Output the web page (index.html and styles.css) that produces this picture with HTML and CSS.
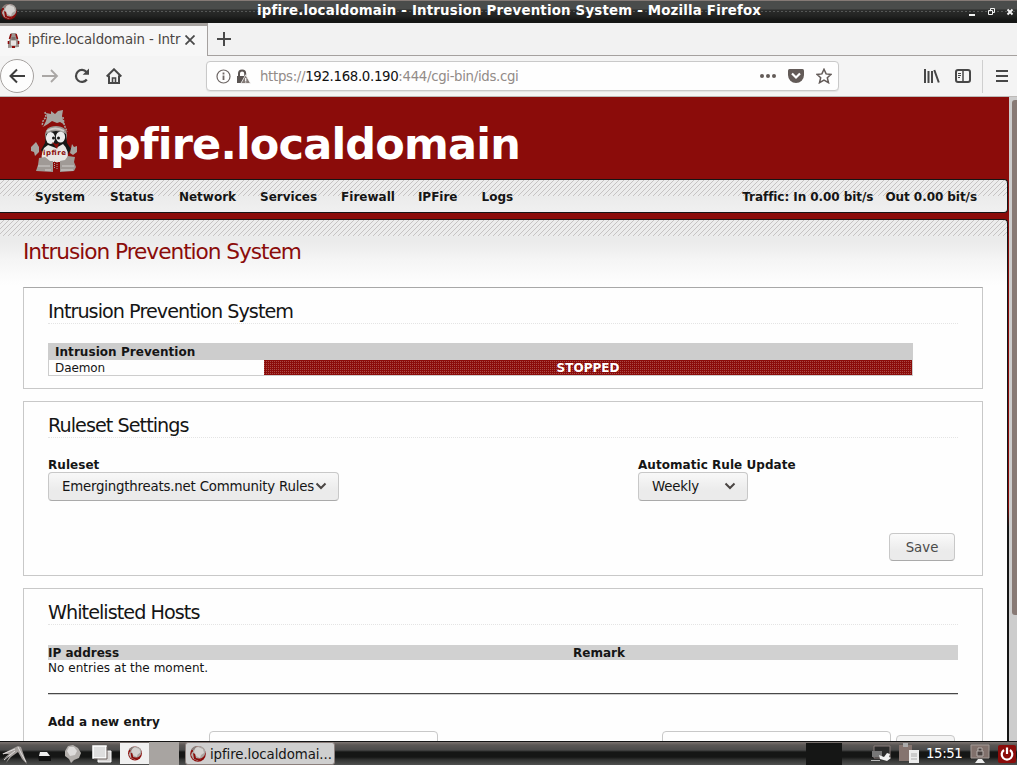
FILE: index.html
```html
<!DOCTYPE html>
<html lang="en">
<head>
<meta charset="utf-8">
<title>ipfire.localdomain - Intrusion Prevention System</title>
<link rel="stylesheet" href="styles.css">
</head>
<body>
<svg class="defs" width="0" height="0" aria-hidden="true">
  <symbol id="globe" viewBox="0 0 18 18">
    <circle cx="9" cy="9" r="7.8" fill="#8b0c0a"/>
    <circle cx="10" cy="7.3" r="6.3" fill="#a9a5a2"/>
    <path d="M6 3l3-1 5 2 1 4-3 2-1 3-4-2-2-4z" fill="#d5d2d0"/>
    <path d="M3 7l3 1 1 4 5 2-3 2-5-2-2-4z" fill="#b5aeab"/>
    <path d="M4 8l2 1 1 4 5 1-2 2-5-2z" fill="#8b0c0a"/>
    <path d="M2 5q2-4 6-4l-3 4z" fill="#8b7f7c"/>
  </symbol>
  <symbol id="chev" viewBox="0 0 12 8"><path d="M1.5 1.5L6 6l4.500-4.500" fill="none" stroke="#4a4543" stroke-width="2"/></symbol>
</svg>

<header class="titlebar">
  <svg class="win-icon" width="18" height="18"><use href="#globe"/></svg>
  <span class="win-title">ipfire.localdomain - Intrusion Prevention System - Mozilla Firefox</span>
  <svg class="win-btns" width="46" height="10" viewBox="0 0 46 10" fill="none" stroke="#f2f2f2">
    <path d="M0 8h6" stroke-width="2"/><path d="M21.500 3.500v-2h4v4h-2M19.500 3.500h4v4h-4z"/><path d="M38.500 2.500l5 5M43.500 2.500l-5 5" stroke-width="2"/>
  </svg>
</header>

<div class="tabs">
  <div class="tab">
    <svg width="13" height="17" viewBox="0 0 13 17"><path d="M4 1l5 0 1 4 2 5 0 5-11 1 0-5 2-4z" fill="#9c9490"/><path d="M4 2L2.500 7M9 2l1.500 5M1.500 9v3M11.500 9v3" stroke="#8b0c0a" stroke-width="1.600"/><path d="M4.500 5h4v3h-4z" fill="#7b7370"/><path d="M4 8.500h5v5H4z" fill="#e8e6e4"/><path d="M5 14h3v2H5z" fill="#8b0c0a"/></svg>
    <span class="tab-text">ipfire.localdomain - Intr</span>
    <svg class="tab-close" width="10" height="10" viewBox="0 0 10 10"><path d="M.5 .5l9 9M9.500 .5l-9 9" stroke="#4a4a4a" stroke-width="1.800"/></svg>
  </div>
  <div class="newtab"><svg width="14" height="14" viewBox="0 0 14 14"><path d="M7 0v14M0 7h14" stroke="#4a4a4a" stroke-width="2"/></svg></div>
</div>

<nav class="toolbar">
  <div class="back"><svg width="18" height="16" viewBox="0 0 18 16" fill="none" stroke="#3e3e3e" stroke-width="2"><path d="M17 8H3M9 1.500L2.500 8 9 14.500"/></svg></div>
  <svg class="fwd" width="17" height="14" viewBox="0 0 17 14" fill="none" stroke="#aaa7a5" stroke-width="1.800"><path d="M0 7h15M9 1l6 6-6 6"/></svg>
  <svg class="reload" width="16" height="16" viewBox="0 0 16 16"><path d="M12.800 11.500A6 6 0 1 1 12.500 4" fill="none" stroke="#474747" stroke-width="2.200"/><path d="M15 .5v6.300H8.700z" fill="#474747"/></svg>
  <svg class="home" width="16" height="16" viewBox="0 0 16 16" fill="none" stroke="#474747" stroke-width="2"><path d="M.7 8.500L8 1.300l7.300 7.200M3 7.500V15h10V7.500"/><path d="M6.500 15v-5h3v5" stroke-width="1.600"/></svg>
  <div class="urlbar">
    <svg width="15" height="15" viewBox="0 0 15 15" fill="none" stroke="#6e6765"><circle cx="7.500" cy="7.500" r="6.500" stroke-width="1.200"/><path d="M7.500 6.500V11M7.500 3.500v2" stroke-width="1.800"/></svg>
    <svg class="lock" width="15" height="15" viewBox="0 0 15 15"><path d="M3 7V4.500a3 3 0 0 1 6.200 0V7" fill="none" stroke="#5a5452" stroke-width="2"/><path d="M1 7h9l-4 7H1z" fill="#5a5452"/><path d="M9.700 5.800L14.600 14.500H4.800z" fill="#827a77" stroke="#fdfdfd" stroke-width=".8"/><path d="M9.700 9v3M9.700 12.600v1" stroke="#fff" stroke-width="1.200"/></svg>
    <span class="url">https://<b>192.168.0.190</b>:444/cgi-bin/ids.cgi</span>
    <svg class="dots" width="16" height="4" viewBox="0 0 16 4" fill="#635b58"><circle cx="2" cy="2" r="2"/><circle cx="8" cy="2" r="2"/><circle cx="14" cy="2" r="2"/></svg>
    <svg class="pocket" width="16" height="14" viewBox="0 0 16 14"><path d="M1.500 0h13Q16 0 16 1.500V6A8 8 0 0 1 0 6V1.500Q0 0 1.500 0z" fill="#635b58"/><path d="M4 4.500l4 4 4-4" fill="none" stroke="#fff" stroke-width="2.200"/></svg>
    <svg class="star" width="16" height="16" viewBox="0 0 16 16"><path d="M8 1.300l2.100 4.600 5 .5-3.800 3.300 1.200 5L8 12.100l-4.500 2.600 1.200-5L.9 6.400l5-.5z" fill="none" stroke="#635b58" stroke-width="1.500"/></svg>
  </div>
  <svg class="library" width="16" height="14" viewBox="0 0 16 14" stroke="#474747" stroke-width="2"><path d="M1 0v14M4.500 2v12M8 2v12M10.300 1l4.500 12.500"/></svg>
  <svg class="sidebar" width="16" height="14" viewBox="0 0 16 14" fill="none" stroke="#474747"><rect x="1" y="1" width="14" height="12" rx="2" stroke-width="2"/><path d="M8 1v12" stroke-width="1.500"/><path d="M3 4.500h3M3 6.500h3M3 8.500h2"/></svg>
  <span class="sep"></span>
  <svg class="burger" width="12" height="12" viewBox="0 0 12 12" stroke="#474747" stroke-width="2"><path d="M0 1h12M0 6h12M0 11h12"/></svg>
</nav>

<div class="viewport">
  <div class="page">
    <div class="banner">
      <svg class="logo" width="50" height="64" viewBox="0 0 50 64">
        <path d="M16 4l5 1 0-3 4 3 3-3 5-1-1 6 1 4 2 5-5-3-3 1-5-2-4 3-5 3 3-6 1-4z" fill="#a8a4a0"/>
        <path d="M15 3l1 5-3 4-1 5M33 8l1 7 3 8" stroke="#a8a4a0" stroke-width="1.500" stroke-dasharray="2 1" fill="none"/>
        <path d="M15 27q0-10 11-10t11 10l-1 5H16z" fill="#9c9894"/>
        <path d="M17 22q8-5 17 0" stroke="#d0cdcb" stroke-width="2" fill="none"/>
        <path d="M16 25q10-6 20 0l1 9 4 6-3 5-24 0-3-4 4-7z" fill="#171817"/>
        <ellipse cx="20.500" cy="29" rx="4.600" ry="6" fill="#ececec"/>
        <ellipse cx="30.500" cy="28" rx="4.600" ry="5.500" fill="#ececec"/>
        <circle cx="23.500" cy="29" r="1.500" fill="#171817"/><circle cx="28.500" cy="29" r="1.500" fill="#171817"/>
        <path d="M12 53q-2-13 6-17l8 3 7-4q7 6 4 18z" fill="#e8e6e4"/>
        <path d="M22 33l4 2 3-1-2 6z" fill="#8b0c0a"/>
        <path d="M1 38l5-5 3 5 0 5-4 4-1-4-3-1zM42 35l2 3 3-1 0 6-4 3-3-2z" fill="#a8a4a0"/>
        <path d="M9 49l6-1 5 4 3 0 0 11-17-1 2-6zM30 52l5-1 3-4 7 1-1 5 2 5-2 4-14 1z" fill="#a09a96"/>
        <path d="M22 53v8M24.500 52v8M27 53v8" stroke="#a8a4a0" stroke-dasharray="1 1"/>
        <path d="M8 57h12M32 57h12M15 61h6M31 61h12" stroke="#d0cdcb"/>
        <text class="logo-text" x="13" y="46" textLength="23">ipfire</text>
      </svg>
      <h1>ipfire.localdomain</h1>
    </div>
    <div class="menu">
      <span>System</span><span class="wider">Status</span><span class="wider">Network</span><span>Services</span><span>Firewall</span><span class="tighter">IPFire</span><span>Logs</span>
      <div class="traffic"><span>Traffic: In 0.00 bit/s</span><span>Out 0.00 bit/s</span></div>
    </div>
    <main class="main">
      <h2 class="title">Intrusion Prevention System</h2>

      <section class="box status-box">
        <h3>Intrusion Prevention System</h3>
        <div class="status">
          <div class="status-head">Intrusion Prevention</div>
          <div class="status-row"><span class="daemon">Daemon</span><span class="stopped">STOPPED</span></div>
        </div>
      </section>

      <section class="box ruleset-box">
        <h3>Ruleset Settings</h3>
        <div class="fields">
          <div class="field"><label>Ruleset</label><div class="select wide"><span>Emergingthreats.net Community Rules</span><svg width="12" height="8"><use href="#chev"/></svg></div></div>
          <div class="field"><label>Automatic Rule Update</label><div class="select narrow"><span>Weekly</span><svg width="12" height="8"><use href="#chev"/></svg></div></div>
        </div>
        <div class="actions"><button class="save">Save</button></div>
      </section>

      <section class="box hosts-box">
        <h3>Whitelisted Hosts</h3>
        <div class="hosts-head"><span>IP address</span><span>Remark</span></div>
        <div class="empty">No entries at the moment.</div>
        <div class="rule"></div>
        <div class="add">Add a new entry</div>
        <div class="inputs"><span class="input"></span><span class="input second"></span><span class="addbtn"></span></div>
      </section>
    </main>
  </div>
  <div class="scroll"><div class="thumb"></div></div>
</div>

<footer class="taskbar">
  <svg class="launch" width="28" height="21" viewBox="0 0 28 21"><path d="M2 11L18 3l3 1 6 17-5-5-4-7-7 5-5 6 4-8-8 5 7-6z" fill="#a39e9b"/><path d="M18 4l3 6 5 9M3 11l12-5M4 17l11-9" stroke="#dedcdb" fill="none"/></svg>
  <svg class="files" width="14" height="16" viewBox="0 0 14 16"><path d="M2 6h7l3 4H1z" fill="#f0f0f0"/><path d="M0 10h13v5H1z" fill="#111"/></svg>
  <svg class="web" width="18" height="20" viewBox="0 0 18 20"><path d="M4 2l5-1 5 3 3 5-2 5-5 2-3 3-2-4-4-3 0-5z" fill="#b3afac"/><path d="M5 3l5 0 3 4-2 4-5 1-3-5z" fill="#dddbda"/></svg>
  <svg class="pager" width="20" height="18" viewBox="0 0 20 18"><path d="M6 6h13v11H6z" fill="#d6d4d3" stroke="#fff"/><path d="M1 1h13v12H1z" fill="#dedede" stroke="#fff" stroke-width="1.500"/><path d="M15 2v12H2" fill="none" stroke="#6c6360"/></svg>
  <div class="pinned"><svg width="16" height="17"><use href="#globe"/></svg></div>
  <div class="blank"></div>
  <div class="task"><svg width="18" height="18"><use href="#globe"/></svg><span>ipfire.localdomai...</span></div>
  <div class="monitor"></div>
  <svg class="net" width="20" height="18" viewBox="0 0 20 18"><path d="M3 1h16v12H3z" fill="#2b2b2b" stroke="#8b7f7c"/><path d="M1 6h10v6H1z" fill="#777"/><path d="M8 10l5 2 3-4 3 1-1 3 2 1-4 3-7-2z" fill="#f0f0f0"/><path d="M0 15.500h9" stroke="#bbb"/></svg>
  <svg class="clip" width="22" height="21" viewBox="0 0 22 21"><path d="M1 2h13v16H1z" fill="#85746f"/><path d="M5 0h5v4H5z" fill="#aaa"/><path d="M11 7h10v13H11z" fill="#ececec"/><path d="M13 11h6M13 13h6M13 16h6" stroke="#aaa"/></svg>
  <span class="clock">15:51</span>
  <svg class="lockscr" width="20" height="20" viewBox="0 0 20 20"><path d="M1 1h18v13H1z" fill="#80706b" stroke="#a39a96"/><path d="M8 7V4h4v3M7 7h6v5H7z" fill="#4a4240" stroke="#b5aeab"/><path d="M8 15h4l3 4H5z" fill="#eee"/></svg>
  <svg class="power" width="18" height="18" viewBox="0 0 18 18"><rect width="18" height="18" rx="2" fill="#8b0c0a"/><path d="M6 5a5.300 5.300 0 1 0 6 0M9 2.500V9" fill="none" stroke="#fff" stroke-width="2.200"/></svg>
</footer>
</body>
</html>
```
FILE: styles.css
```css
* { box-sizing: border-box; }
body {
  margin: 0;
  width: 1017px;
  height: 765px;
  overflow: hidden;
  display: flex;
  flex-direction: column;
  font: 12px/15px "DejaVu Sans", sans-serif;
  color: #151515;
  background: #fff;
}
svg { display: block; flex: none; }
.defs { position: absolute; }

/* window title */
.titlebar {
  flex: none;
  height: 23px;
  display: flex;
  align-items: center;
  background:
    radial-gradient(circle, #555756 0.5px, transparent 0.9px) 0 10px / 4px 3px repeat-x,
    linear-gradient(#857a76 1px, #4a4c4b 1px, #4a4c4b 9px, #2c2d2c 10px, #222322 16px, #151615 20px);
}
.win-title {
  flex: 1;
  text-align: center;
  color: #fff;
  font-weight: bold;
  font-size: 13.33px;
  letter-spacing: 0.2px;
  white-space: nowrap;
  padding-left: 31px;
  margin-top: -3px;
}
.win-btns { margin-right: 2px; }

/* tabs */
.tabs {
  flex: none;
  height: 33px;
  display: flex;
  background: #f2f2f2;
}
.tab {
  width: 208px;
  display: flex;
  align-items: center;
  border-top: 3px solid #a8a4a1;
  border-right: 1px solid #a5a19f;
  background: #f7f7f7;
  padding: 0 0 2px 7px;
}
.tab-text {
  margin-left: 8px;
  width: 157px;
  font-size: 13.33px;
  letter-spacing: -0.13px;
  color: #4b4644;
  white-space: nowrap;
  padding-bottom: 2px;
}
.newtab {
  flex: 1;
  padding: 9px;
  border-bottom: 1px solid #a5a19f;
}

/* navigation */
.toolbar {
  flex: none;
  height: 41px;
  display: flex;
  align-items: center;
  background: #f4f4f4;
  border-bottom: 1px solid #bdbab8;
}
.back {
  width: 34px;
  height: 34px;
  border: 1px solid #a5a19f;
  border-radius: 50%;
  background: #fdfdfd;
  display: flex;
  align-items: center;
  justify-content: center;
}
.fwd { margin-left: 8px; }
.reload { margin-left: 15px; }
.home { margin-left: 16px; }
.urlbar {
  margin-left: 84px;
  width: 633px;
  height: 30px;
  border: 1px solid #c9c9c9;
  border-radius: 4px;
  background: #fefefe;
  box-shadow: 0 1px 1px #e2e2e2;
  display: flex;
  align-items: center;
  padding-left: 9px;
}
.lock { margin-left: 5px; }
.url {
  margin-left: 9px;
  width: 500px;
  font-size: 13.33px;
  letter-spacing: -0.33px;
  color: #928b88;
  white-space: nowrap;
}
.url b { font-weight: normal; color: #111; }
.pocket { margin-left: 12px; }
.star { margin-left: 12px; }
.library { margin-left: 85px; }
.sidebar { margin-left: 15px; }
.sep { width: 1px; height: 33px; background: #cfcfcf; margin-left: 11px; }
.burger { margin-left: 13px; }

/* page */
.viewport {
  flex: 1;
  min-height: 0;
  display: flex;
  border-bottom: 1px solid #151515;
}
.page {
  width: 1009px;
  overflow: hidden;
  background: linear-gradient(#8b0c0a 410px, #151515 430px);
}
.banner {
  height: 82px;
  display: flex;
  align-items: flex-start;
  padding: 12px 0 0 30px;
}
.logo-text {
  font: bold 7px "DejaVu Sans", sans-serif;
  fill: #8b0c0a;
}
h1 {
  margin: 10px 0 0 16px;
  color: #fff;
  font-size: 43px;
  line-height: 50px;
  letter-spacing: -0.82px;
}
.menu {
  height: 34px;
  width: 1008px;
  border: 1px solid #151515;
  border-left: 0;
  border-radius: 0 4px 4px 0;
  background:
    linear-gradient(transparent 16px, #ebebeb 16px, #f0f0f0),
    linear-gradient(135deg, transparent 40%, #c6c3c3 40%, #c6c3c3 50%, transparent 50%, transparent 90%, #c6c3c3 90%) 0 0 / 5px 5px,
    #ececec;
  display: flex;
  align-items: center;
  gap: 24px;
  padding: 2px 30px 0 35px;
  font-weight: bold;
}
.wider { margin-left: 1px; }
.tighter { margin-left: -1px; }
.traffic { margin-left: auto; display: flex; gap: 12px; letter-spacing: -0.06px; }
.main {
  margin-top: 6px;
  width: 1008px;
  height: 540px;
  border-top: 1px solid #151515;
  border-right: 1px solid #151515;
  border-radius: 0 4px 0 0;
  padding: 17px 24px 0 23px;
  background:
    linear-gradient(transparent 16px, #ebebeb 16px, #ebebeb 22px, #f5f5f5 40px, #fefefe 65px),
    linear-gradient(135deg, transparent 40%, #c6c3c3 40%, #c6c3c3 50%, transparent 50%, transparent 90%, #c6c3c3 90%) 0 0 / 5px 5px,
    #ececec;
}
.title {
  margin: 0 0 21px;
  font-size: 21.7px;
  line-height: 29px;
  font-weight: normal;
  letter-spacing: -1.05px;
  color: #8b0c0a;
}
.box {
  width: 960px;
  margin-bottom: 12px;
  padding: 10px 24px 0;
  border: 1px solid #c8c8c8;
  background: #fefefe;
}
.box h3 {
  margin: 0;
  height: 26px;
  line-height: 28px;
  font-size: 19.2px;
  font-weight: normal;
  letter-spacing: -0.96px;
  border-bottom: 1px dotted #e4e4e4;
}
.status-box { height: 102px; border-top-color: #a8a8a8; }
.status { margin-top: 19px; width: 865px; }
.status-head {
  height: 17px;
  line-height: 19px;
  padding-left: 7px;
  background: #cdcdcd;
  font-weight: bold;
  letter-spacing: 0.05px;
}
.status-row {
  height: 16px;
  line-height: 17px;
  display: flex;
  border: 1px solid #cdcdcd;
  border-top: 0;
}
.daemon { width: 215px; padding-left: 6px; letter-spacing: -0.1px; }
.stopped {
  flex: 1;
  text-align: center;
  color: #fff;
  font-weight: bold;
  background:
    repeating-linear-gradient(90deg, transparent 0, transparent 1px, #8b0c0a 1px, #8b0c0a 2px),
    repeating-linear-gradient(#8b0c0a 0, #8b0c0a 1px, #a84a46 1px, #a84a46 2px);
}
.ruleset-box { height: 175px; }
.fields {
  display: grid;
  grid-template-columns: 590px 1fr;
  margin-top: 19px;
}
.field label {
  display: block;
  height: 15px;
  line-height: 17px;
  font-weight: bold;
  letter-spacing: 0.05px;
}
.select {
  height: 29px;
  border: 1px solid #c8c8c8;
  border-bottom-color: #aaa;
  border-radius: 4px;
  background: linear-gradient(#f8f8f8, #ebebeb 65%);
  display: flex;
  align-items: center;
  justify-content: space-between;
  padding-left: 13px;
  font-size: 13.33px;
  letter-spacing: -0.2px;
  white-space: nowrap;
}
.select svg { margin-bottom: 2px; }
.wide { width: 291px; padding-right: 11px; }
.narrow { width: 110px; padding-right: 11px; }
.actions { display: flex; justify-content: flex-end; margin-top: 32px; }
.save {
  width: 66px;
  height: 28px;
  margin-right: 3px;
  padding: 0;
  border: 1px solid #c8c8c8;
  border-bottom-color: #aaa;
  border-radius: 4px;
  background: linear-gradient(#fafafa, #ebebeb 65%);
  color: #4a4a4a;
  font: 13.33px "DejaVu Sans", sans-serif;
}
.hosts-box { height: 200px; }
.hosts-head {
  margin-top: 20px;
  height: 15px;
  line-height: 17px;
  display: grid;
  grid-template-columns: 525px 1fr;
  background: #d1d1d1;
  font-weight: bold;
}
.empty { height: 15px; line-height: 17px; letter-spacing: 0.04px; }
.rule { margin-top: 18px; height: 2px; background: linear-gradient(#484848 50%, #d0d0d0 50%); }
.add {
  margin-top: 19px;
  height: 15px;
  line-height: 17px;
  font-weight: bold;
  letter-spacing: 0.06px;
}
.inputs { display: flex; padding-left: 161px; margin-top: 2px; }
.input {
  width: 229px;
  height: 28px;
  border: 1px solid #c8c8c8;
  border-radius: 4px;
}
.second { margin-left: 224px; }
.addbtn {
  width: 59px;
  height: 24px;
  margin: 4px 0 0 5px;
  border: 1px solid #c8c8c8;
  border-radius: 4px;
  background: #f4f4f4;
}
.scroll {
  width: 8px;
  padding: 3px 0 0 3px;
  background: #cdcdcd;
}
.thumb { height: 515px; width: 8px; border-radius: 3px; background: #887a75; }

/* desktop panel */
.taskbar {
  flex: none;
  height: 23px;
  margin-top: 0;
  display: flex;
  align-items: center;
  background: linear-gradient(#7d7572 0, #5a5654 3px, #4a4a4a 8px, #151615 10px, #151615 15px, #343534 18px, #555 24px);
}
.launch { margin-left: 0; }
.files { margin-left: 10px; }
.web { margin-left: 12px; }
.pager { margin-left: 10px; }
.pinned {
  margin-left: 8px;
  width: 29px;
  height: 21px;
  background: #f0f0f0;
  display: flex;
  align-items: center;
  justify-content: center;
}
.blank { width: 30px; height: 23px; background: #a8a4a1; }
.task {
  margin-left: 6px;
  width: 150px;
  height: 23px;
  display: flex;
  align-items: center;
  border: 1px solid #8b7f7c;
  border-radius: 3px;
  background: #cfcfcf;
  padding-left: 3px;
}
.task span { margin-left: 3px; padding-top: 1px; font-size: 13.33px; letter-spacing: -0.08px; white-space: nowrap; }
.monitor { width: 36px; height: 22px; margin-left: 471px; background: #151615; }
.net { margin-left: 29px; }
.clip { margin-left: 7px; }
.clock { margin-left: 6px; width: 37px; color: #fff; font-size: 13.33px; letter-spacing: -0.4px; }
.lockscr { margin-left: 7px; }
.power { margin-left: 8px; }
```
